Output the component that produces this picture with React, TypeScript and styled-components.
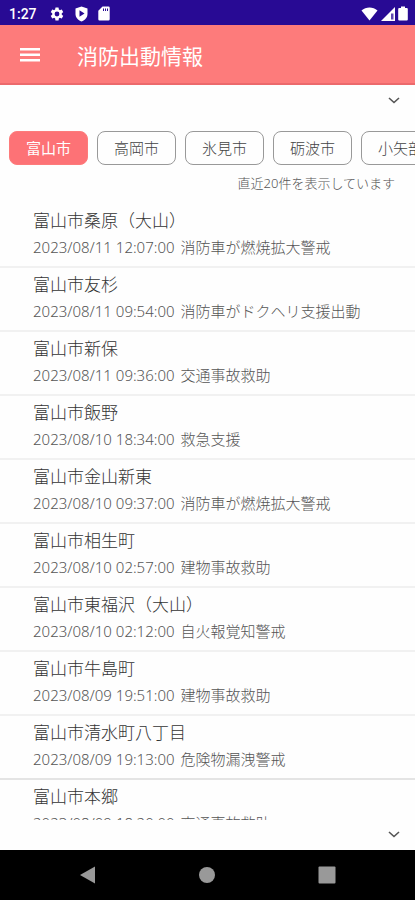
import React, { useState } from "react";
import styled, { createGlobalStyle } from "styled-components";

const cjk = '"Noto Sans CJK JP", sans-serif';

const GlobalStyle = createGlobalStyle`
  * { box-sizing: border-box; }
  body { margin: 0; background: #fefefe; font-family: "Noto Sans", ${cjk}; }
  button { font: inherit; padding: 0; border: 0; background: none; cursor: pointer; }
`;

const Screen = styled.div`
  display: flex;
  flex-direction: column;
  height: 100vh;
  overflow: hidden;
  background: #fefefe;
`;

const StatusBar = styled.div`
  display: flex;
  flex: none;
  align-items: center;
  justify-content: space-between;
  height: 25px;
  padding: 2px 7px 0 9px;
  background: #280a94;
  color: #fff;
`;

const StatusGroup = styled.div<{ $gap: number }>`
  display: flex;
  align-items: center;
  gap: ${(p) => p.$gap}px;
`;

const Clock = styled.time`
  margin-right: 2px;
  font: 500 14px/20px Roboto, sans-serif;
`;

const AppBar = styled.header`
  display: flex;
  flex: none;
  align-items: center;
  gap: 37px;
  height: 60px;
  padding: 2px 0 0 20px;
  border-bottom: 2px solid #ec6a6c;
  background: #fd7b7b;
  color: #fff;
`;

const MenuButton = styled.button`
  display: flex;
  color: inherit;
`;

const Title = styled.h1`
  margin: 0;
  font: 400 21px/32px ${cjk};
`;

const ToggleRow = styled.div<{ $bottom?: boolean }>`
  display: flex;
  flex: none;
  align-items: center;
  justify-content: flex-end;
  height: 30px;
  padding: 0 14px ${(p) => (p.$bottom ? 2 : 0)}px 0;
`;

const ToggleButton = styled.button`
  display: flex;
  color: #555;
`;

const Chips = styled.nav`
  display: flex;
  flex: none;
  gap: 9px;
  margin-top: 16px;
  padding-left: 9px;
  overflow: hidden;
`;

const Chip = styled.button<{ $active: boolean }>`
  && {
    flex: none;
    height: 34px;
    padding: 0 16px;
    border: 1px solid ${(p) => (p.$active ? "#fd7b7b" : "#999")};
    border-radius: 8px;
    background: ${(p) => (p.$active ? "#fd7276" : "#fefefe")};
    color: ${(p) => (p.$active ? "#fff" : "#444")};
    font: ${(p) => (p.$active ? 400 : 300)} 15px/30px ${cjk};
  }
`;

const Note = styled.p`
  flex: none;
  margin: 7px 20px 0 0;
  color: #555;
  font-size: 13px;
  font-weight: 300;
  line-height: 22px;
  text-align: right;
`;

const List = styled.ul`
  flex: 1;
  min-height: 0;
  margin: 10px 0 0;
  padding: 0;
  overflow: hidden;
  list-style: none;
`;

const Item = styled.li`
  height: 64px;
  padding: 2px 33px 0;
  border-bottom: 2px solid #f1f1f1;

  &:nth-last-child(2) {
    border-color: #e4e4e4;
  }
`;

const Place = styled.h2`
  margin: 0;
  color: #333;
  font: 300 17px/27px ${cjk};
`;

const Detail = styled.p`
  display: flex;
  gap: 6px;
  margin: 0;
  color: #555;
  font-size: 15px;
  font-weight: 300;
  line-height: 29px;
  white-space: nowrap;
`;

const NavBar = styled.nav`
  display: flex;
  flex: none;
  align-items: center;
  justify-content: space-around;
  height: 50px;
  padding: 0 28px;
  background: #000;
  color: #999;
`;

const NavButton = styled.button`
  display: flex;
  color: inherit;
`;

const cities = ["富山市", "高岡市", "氷見市", "砺波市", "小矢部市"];

const incidents = [
  ["富山市桑原（大山）", "2023/08/11 12:07:00", "消防車が燃焼拡大警戒"],
  ["富山市友杉", "2023/08/11 09:54:00", "消防車がドクヘリ支援出動"],
  ["富山市新保", "2023/08/11 09:36:00", "交通事故救助"],
  ["富山市飯野", "2023/08/10 18:34:00", "救急支援"],
  ["富山市金山新東", "2023/08/10 09:37:00", "消防車が燃焼拡大警戒"],
  ["富山市相生町", "2023/08/10 02:57:00", "建物事故救助"],
  ["富山市東福沢（大山）", "2023/08/10 02:12:00", "自火報覚知警戒"],
  ["富山市牛島町", "2023/08/09 19:51:00", "建物事故救助"],
  ["富山市清水町八丁目", "2023/08/09 19:13:00", "危険物漏洩警戒"],
  ["富山市本郷", "2023/08/09 18:20:00", "交通事故救助"],
];

const Chevron = () => (
  <svg width="14" height="14" viewBox="0 0 14 14" fill="none" stroke="currentColor" strokeWidth="1.6">
    <path d="M2 5l5 4.5L12 5" />
  </svg>
);

const Gear = () => (
  <svg width="16" height="16" viewBox="0 0 24 24" fill="currentColor">
    <path d="M19.14 12.94c.04-.3.06-.61.06-.94s-.02-.64-.07-.94l2.03-1.58a.5.5 0 0 0 .12-.61l-1.92-3.32a.49.49 0 0 0-.59-.22l-2.39.96c-.5-.38-1.03-.7-1.62-.94l-.36-2.54a.48.48 0 0 0-.48-.41h-3.84a.47.47 0 0 0-.47.41l-.36 2.54c-.59.24-1.13.57-1.62.94l-2.39-.96a.48.48 0 0 0-.59.22L2.74 8.87a.47.47 0 0 0 .12.61l2.03 1.58c-.05.3-.09.63-.09.94s.02.64.07.94l-2.03 1.58a.5.5 0 0 0-.12.61l1.92 3.32c.12.22.37.29.59.22l2.39-.96c.5.38 1.03.7 1.62.94l.36 2.54c.05.24.24.41.48.41h3.84c.24 0 .44-.17.47-.41l.36-2.54c.59-.24 1.13-.56 1.62-.94l2.39.96c.22.08.47 0 .59-.22l1.92-3.32a.47.47 0 0 0-.12-.61zM12 15.6a3.6 3.6 0 1 1 0-7.2 3.6 3.6 0 0 1 0 7.2z" />
  </svg>
);

const Shield = () => (
  <svg width="13" height="16" viewBox="0 0 13 16">
    <path d="M6.5 .5L12.5 2.5V8c0 3.500-2.500 6-6 7.500C3 14 .5 11.500.5 8V2.500z" fill="#fff" />
    <path d="M4.500 4.300l5 3.200-5 3.200z" fill="#280a94" />
  </svg>
);

const SdCard = () => (
  <svg width="12" height="15" viewBox="0 0 12 15">
    <path d="M4.500.5H10.500a1.200 1.200 0 0 1 1.200 1.200V13.300a1.200 1.200 0 0 1-1.200 1.200H1.500A1.200 1.200 0 0 1 .3 13.300V4.800z" fill="#fff" />
    <path d="M5 2.500h1v2.500H5zM7 2.500h1v2.500H7zM9 2.500h1v2.500H9z" fill="#280a94" />
  </svg>
);

const Wifi = () => (
  <svg width="17" height="14" viewBox="0 0 17 14" fill="#fff">
    <path d="M.5 3.500C5-.4 12-.4 16.500 3.500L8.500 13.500z" />
  </svg>
);

const Signal = () => (
  <svg width="14" height="14" viewBox="0 0 14 14">
    <path d="M0 14L14 0V14z" fill="#fff" />
    <path d="M10 6.500h2.500V12.500H10z" fill="#280a94" opacity=".75" />
  </svg>
);

const Battery = () => (
  <svg width="10" height="15" viewBox="0 0 10 15" fill="#fff">
    <path d="M3 .5h4V2h1.800a1 1 0 0 1 1 1v10.500a1 1 0 0 1-1 1H1.200a1 1 0 0 1-1-1V3a1 1 0 0 1 1-1H3z" />
  </svg>
);

export default function App() {
  const [active, setActive] = useState(cities[0]);
  return (
    <>
      <GlobalStyle />
      <Screen>
        <StatusBar>
          <StatusGroup $gap={10}>
            <Clock>1:27</Clock>
            <Gear />
            <Shield />
            <SdCard />
          </StatusGroup>
          <StatusGroup $gap={3}>
            <Wifi />
            <Signal />
            <Battery />
          </StatusGroup>
        </StatusBar>
        <AppBar>
          <MenuButton aria-label="メニュー">
            <svg width="20" height="16" viewBox="0 0 20 16" fill="currentColor">
              <path d="M0 1h20v2.500H0zM0 6.500h20v2.500H0zM0 12h20v2.500H0z" />
            </svg>
          </MenuButton>
          <Title>消防出動情報</Title>
        </AppBar>
        <ToggleRow>
          <ToggleButton aria-label="上部を開く">
            <Chevron />
          </ToggleButton>
        </ToggleRow>
        <Chips>
          {cities.map((city) => (
            <Chip key={city} $active={city === active} onClick={() => setActive(city)}>
              {city}
            </Chip>
          ))}
        </Chips>
        <Note>直近20件を表示しています</Note>
        <List>
          {incidents.map(([place, date, detail]) => (
            <Item key={date}>
              <Place>{place}</Place>
              <Detail>
                <time>{date}</time>
                <span>{detail}</span>
              </Detail>
            </Item>
          ))}
        </List>
        <ToggleRow $bottom>
          <ToggleButton aria-label="下部を開く">
            <Chevron />
          </ToggleButton>
        </ToggleRow>
        <NavBar>
          <NavButton aria-label="戻る">
            <svg width="18" height="18" viewBox="0 0 18 18" fill="currentColor">
              <path d="M1 9L16 .5V17.500z" />
            </svg>
          </NavButton>
          <NavButton aria-label="ホーム">
            <svg width="18" height="18" viewBox="0 0 18 18" fill="currentColor">
              <circle cx="9" cy="9" r="8" />
            </svg>
          </NavButton>
          <NavButton aria-label="履歴">
            <svg width="18" height="18" viewBox="0 0 18 18" fill="currentColor">
              <rect x=".5" y=".5" width="17" height="17" rx="1" />
            </svg>
          </NavButton>
        </NavBar>
      </Screen>
    </>
  );
}
